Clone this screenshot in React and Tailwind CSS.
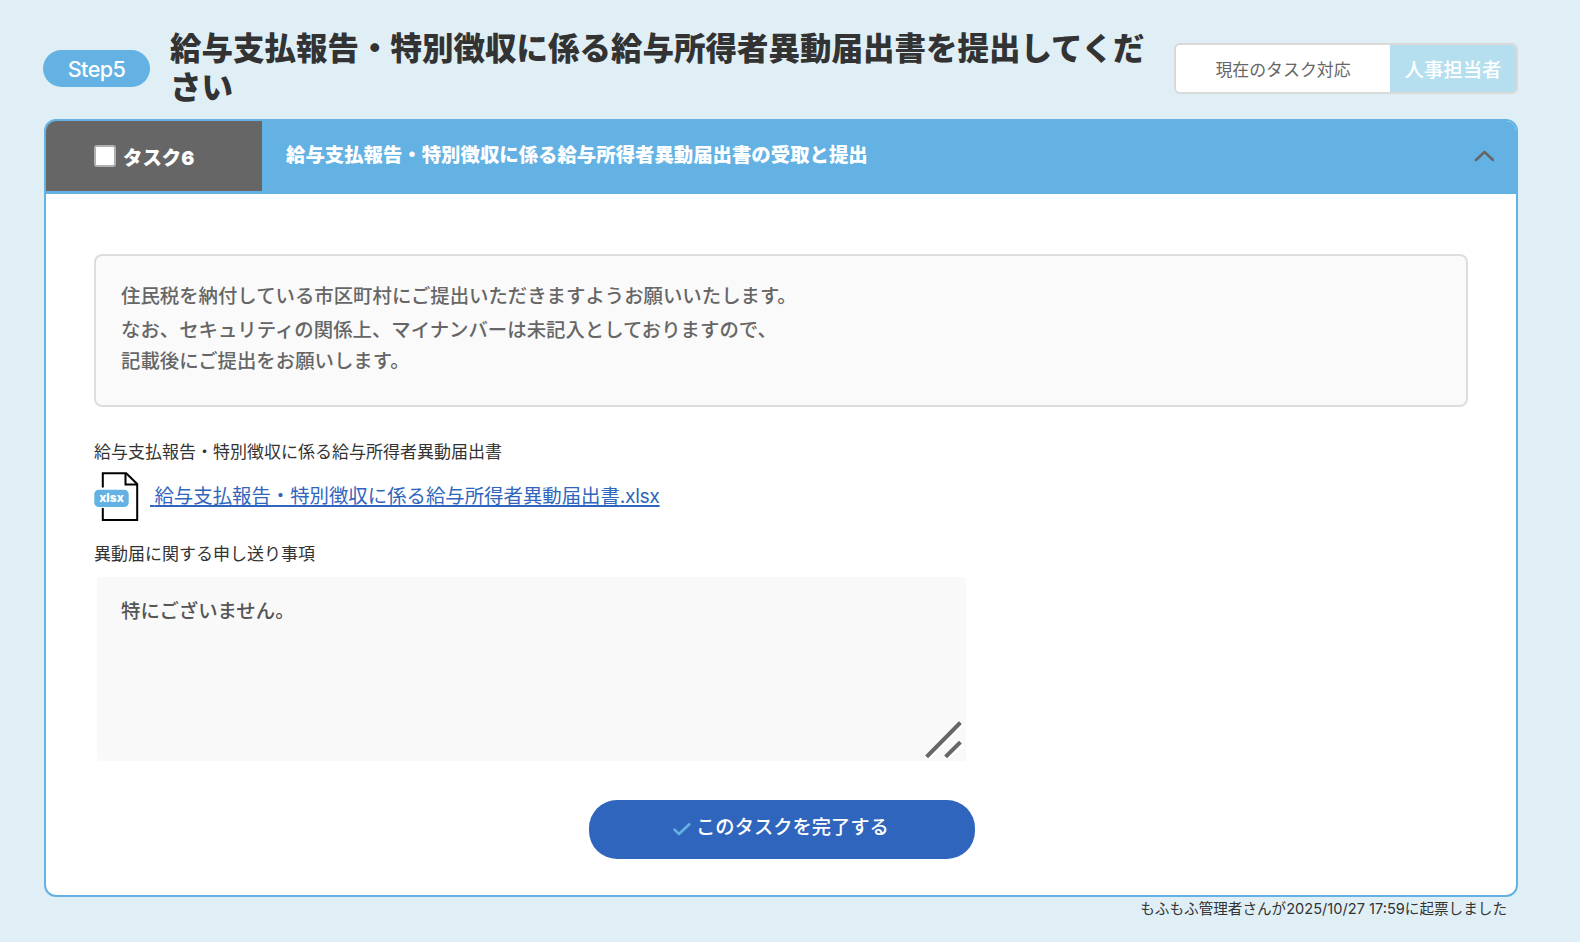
import { useState } from 'react';

// ─── Icons ───────────────────────────────────────────────────────────────────
function ChevronUp() {
  return (
    <svg width="20" height="12" viewBox="0 0 20 12" fill="none" stroke="#666666" strokeWidth="2.6" strokeLinecap="round" strokeLinejoin="round">
      <path d="M2 10 10.5 2 19 10" />
    </svg>
  );
}

function CheckIcon() {
  return (
    <svg width="18" height="14" viewBox="0 0 18 14" fill="none" stroke="#63b2e3" strokeWidth="2.6" strokeLinecap="round" strokeLinejoin="round">
      <path d="M1.5 6.6 6 11 16.3 1.3" />
    </svg>
  );
}

function XlsxIcon() {
  return (
    <svg width="45" height="50" viewBox="0 0 45 50">
      <path d="M8.8 1.3h23.4L43.2 12v36H8.8z" fill="#fff" stroke="#000" strokeWidth="2" />
      <path d="M31.5 1.3v11.2h11.7" fill="none" stroke="#000" strokeWidth="2" />
      <rect x="0" y="15.5" width="35" height="20.5" fill="#fff" />
      <rect x="0.3" y="17.8" width="34.4" height="17.2" rx="4.5" fill="#63b2e3" />
      <text x="17.5" y="30" textAnchor="middle" fontSize="12" fontWeight="800" fill="#fff" fontFamily="Inter, sans-serif">
        xlsx
      </text>
    </svg>
  );
}

function ResizeGrip() {
  return (
    <svg width="40" height="40" viewBox="0 0 40 40" fill="none" strokeLinecap="square">
      <path d="M4.5 38 37 6.5M24 38 37 26.5" stroke="#fff" strokeWidth="5" />
      <path d="M4 36.5 35 5M23 36.5 35 24.5" stroke="#666666" strokeWidth="4" />
    </svg>
  );
}

export default function App() {
  const [isDone, setIsDone] = useState(false);

  return (
    <div className="h-[942px] w-[1580px] overflow-hidden bg-[#e0eff6] pl-[44px] pr-[62px] font-['Inter','Noto_Sans_CJK_JP',sans-serif] text-[#333333]">

      {/* Step heading */}
      <header className="flex h-[119px] items-start">
        <span className="-ml-px mt-[50px] flex h-[37px] w-[107px] shrink-0 items-center justify-center rounded-full bg-[#63b2e3] pt-0.5 text-[21.6px] font-medium tracking-[-0.6px] text-white">
          Step5
        </span>
        <h1 className="ml-5 mt-[30px] w-[984px] shrink-0 text-[31.5px] font-black leading-[38.5px]">
          給与支払報告・特別徴収に係る給与所得者異動届出書を提出してください
        </h1>
        <div className="ml-auto mt-[43px] flex h-[51px] w-[344px] shrink-0 overflow-hidden rounded-md border-2 border-[#d9d9d9] bg-white">
          <span className="flex w-[214px] items-center justify-center pt-[5px] text-[16.9px] text-[#666666]">現在のタスク対応</span>
          <span className="flex flex-1 items-center justify-center bg-[#b5dfef] pt-[4px] text-[19.4px] font-medium text-white">人事担当者</span>
        </div>
      </header>

      {/* Task card */}
      <section className="h-[778px] overflow-hidden rounded-xl border-2 border-[#63b2e3] bg-white">
        <div className="flex h-[73px] border-b-[3px] border-[#63b2e3] bg-[#63b2e3] text-[19.4px] font-black text-white">
          <label className="flex w-[216px] shrink-0 items-center bg-[#666666] pl-[48px]">
            <input
              type="checkbox"
              checked={isDone}
              onChange={() => setIsDone(!isDone)}
              className="size-[22px] appearance-none rounded-[3px] border-2 border-[#b0b0b0] bg-white"
            />
            <span className="ml-[7px] pt-[5px]">タスク6</span>
          </label>
          <h2 className="flex flex-1 items-center pb-px pl-6">給与支払報告・特別徴収に係る給与所得者異動届出書の受取と提出</h2>
          <button type="button" className="flex items-center pr-[22px]">
            <ChevronUp />
          </button>
        </div>

        <div className="px-[48px] pt-[60px]">
          {/* Notice */}
          <div className="h-[153px] rounded-lg border-2 border-[#dddddd] bg-[#fafafa] pl-[25px] pt-[24px] text-[19.4px] font-medium leading-[32px] text-[#666666]">
            <p>住民税を納付している市区町村にご提出いただきますようお願いいたします。</p>
            <p className="pt-0.5">なお、セキュリティの関係上、マイナンバーは未記入としておりますので、</p>
            <p className="-mt-px">記載後にご提出をお願いします。</p>
          </div>

          <p className="mt-[33px] text-[17px] leading-[25px]">給与支払報告・特別徴収に係る給与所得者異動届出書</p>
          <div className="mt-[7px] flex h-[50px]">
            <XlsxIcon />
            <a href="#" className="ml-[11px] whitespace-pre text-[19.4px] leading-[48px] text-[#2f65bc] underline decoration-2 underline-offset-[2px]">
              <span className="tracking-[-1px]"> </span>
              給与支払報告・特別徴収に係る給与所得者異動届出書
              <span className="tracking-[-0.4px]">.xlsx</span>
            </a>
          </div>

          <p className="mt-[20px] text-[17px] leading-[25px]">異動届に関する申し送り事項</p>
          <div className="relative ml-[3px] mt-[10px] h-[184px] w-[869px] rounded-[3px] bg-[#f9f9f9] pl-[24px] pt-[18px] text-[19.4px] font-medium leading-[32px] text-[#555555]">
            特にございません。
            <div className="absolute bottom-0.5 right-0.5">
              <ResizeGrip />
            </div>
          </div>

          <button
            type="button"
            onClick={() => setIsDone(true)}
            className="ml-[495px] mt-[39px] flex h-[59px] w-[386px] items-center justify-center rounded-[28px] bg-[#2f65bc] pr-0.5 text-[19.3px] font-medium text-white"
          >
            <CheckIcon />
            <span className="ml-[5px] pb-1">このタスクを完了する</span>
          </button>
        </div>
      </section>

      <p className="pr-[11px] pt-px text-right text-[14.6px] leading-[22px]">もふもふ管理者さんが2025/10/27 17:59に起票しました</p>
    </div>
  );
}
